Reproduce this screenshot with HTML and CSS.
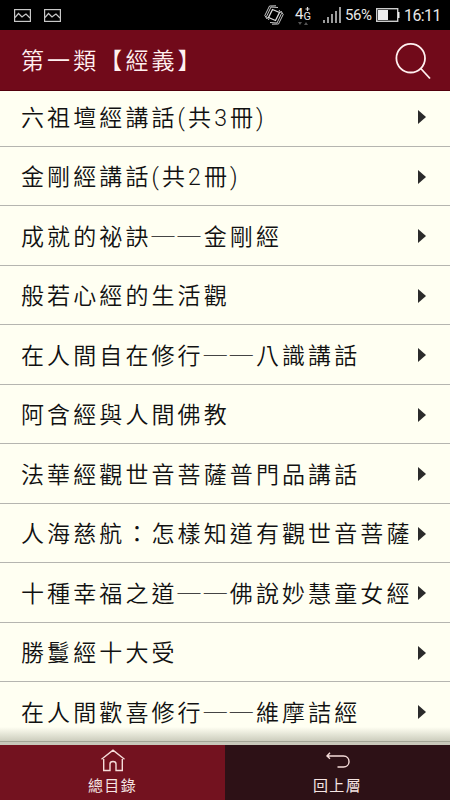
FILE: index.html
```html
<!DOCTYPE html>
<html lang="zh-Hant">
<head>
    <meta charset="UTF-8">
    <meta name="viewport" content="width=device-width, initial-scale=1.0">
    <title>第一類【經義】</title>
    <link rel="stylesheet" href="styles.css">
</head>
<body>
    <div class="status-bar">
        <div class="status-left">
            <svg class="photo" width="17" height="13" viewBox="0 0 17 13"><rect x="0.6" y="0.6" width="15.8" height="11.8"/><path d="M1 8.5L4.5 4.5L8 8L10.5 6L12 5L16 9"/></svg>
            <svg class="photo" width="17" height="13" viewBox="0 0 17 13"><rect x="0.6" y="0.6" width="15.8" height="11.8"/><path d="M1 8.5L4.5 4.5L8 8L10.5 6L12 5L16 9"/></svg>
        </div>
        <div class="status-right">
            <svg class="vibrate" width="20" height="20" viewBox="0 0 20 20"><path d="M8.500 4.500L15.500 7.500L11.500 15.500L4.500 12.500Z"/><path class="waves" d="M14 2.500L7 2L2.500 11.500L5 15M12 .8L5.500 1L.8 10.500L3 14M6 17.500L13 18L17.500 8.500L15 5M8 19.200L14.500 19L19.200 9.500L17 6"/></svg>
            <div class="network">
                <span class="four">4</span>
                <span class="gen">G</span>
                <svg class="network-marks" width="18" height="24" viewBox="0 0 18 24"><path class="plus" d="M12.500 2v4M10.500 4h4"/><path class="traffic" d="M3 17h4l-2 3zM9 20h4l-2 -3z"/></svg>
            </div>
            <svg class="signal" width="18" height="16" viewBox="0 0 18 16"><path d="M1 13v3M5 10v6M9 7v9M13 4v12M17 0v16"/></svg>
            <span class="percent">56%</span>
            <svg class="battery" width="24" height="14" viewBox="0 0 24 14"><rect class="case" x="0.7" y="0.7" width="21" height="12.600"/><path d="M2 2h10v10H2zM22 4h1.500v6h-1.500z"/></svg>
            <span class="clock">16:11</span>
        </div>
    </div>

    <header class="header">
        <h1>第一類【經義】</h1>
        <svg class="search" width="36" height="37" viewBox="0 0 36 37"><circle cx="15.700" cy="15.200" r="14.300"/><path d="M25.800 25.500L35 35.500"/></svg>
    </header>

    <ul class="list">
        <li>六祖壇經講話(共3冊)</li>
        <li>金剛經講話(共2冊)</li>
        <li>成就的祕訣<span class="dash">──</span>金剛經</li>
        <li>般若心經的生活觀</li>
        <li>在人間自在修行<span class="dash">──</span>八識講話</li>
        <li>阿含經與人間佛教</li>
        <li>法華經觀世音菩薩普門品講話</li>
        <li>人海慈航：怎樣知道有觀世音菩薩</li>
        <li>十種幸福之道<span class="dash">──</span>佛說妙慧童女經</li>
        <li>勝鬘經十大受</li>
        <li>在人間歡喜修行<span class="dash">──</span>維摩詰經</li>
    </ul>

    <nav class="tabs">
        <a class="tab tab-home">
            <svg width="26" height="24" viewBox="0 0 26 24"><path d="M1.500 10.300L13 1.200L24.500 10.300M3.700 10V21.500H10V15Q10 12.500 13 12.500T16 15V21.500H22.300V10"/></svg>
            <span>總目錄</span>
        </a>
        <a class="tab tab-back">
            <svg width="26" height="24" viewBox="0 0 26 24"><path d="M5 3.800L2 7L5 9.700M2 7H18.500C22 7 24 9.500 24 12.500C24 16 21.500 18 18.500 18H12.500"/></svg>
            <span>回上層</span>
        </a>
    </nav>
</body>
</html>
```
FILE: styles.css
```css
* {
    box-sizing: border-box;
}
body {
    display: flex;
    flex-direction: column;
    height: 800px;
    margin: 0;
    overflow: hidden;
    background-color: #fffff2;
    font-family: Roboto, "Noto Sans CJK TC", sans-serif;
    font-weight: 350;
}
svg {
    display: block;
    flex: none;
    fill: none;
}

/* status bar */
.status-bar {
    display: flex;
    justify-content: space-between;
    align-items: center;
    flex: none;
    height: 30px;
    padding: 0 10px 0 14px;
    background-color: #000;
    color: #e8e8e8;
    font-weight: 400;
    font-size: 16px;
}
.status-left, .status-right {
    display: flex;
    align-items: center;
}
.status-left {
    gap: 13px;
}
.photo {
    stroke: #c8c8c8;
    stroke-width: 1.2;
}
.vibrate {
    margin-right: 11px;
    stroke: #ddd;
    stroke-width: 1.3;
}
.vibrate .waves {
    stroke-width: 0.9;
}
.network {
    position: relative;
    display: flex;
    align-items: center;
    width: 18px;
    height: 20px;
    margin-right: 10px;
    line-height: 20px;
}
.four {
    padding-bottom: 2px;
    font-size: 15px;
}
.gen {
    padding-top: 3px;
    font-size: 11px;
}
.network-marks {
    position: absolute;
    left: 0;
    top: 0;
}
.plus {
    stroke: #ddd;
    stroke-width: 1.2;
}
.traffic {
    fill: #555;
}
.signal {
    margin-right: 4px;
    stroke: #ddd;
    stroke-width: 1.4;
}
.percent {
    width: 28px;
    margin-right: 3px;
    font-size: 15px;
    letter-spacing: -0.4px;
}
.battery {
    margin-right: 4px;
    fill: #eee;
}
.battery .case {
    fill: none;
    stroke: #ccc;
    stroke-width: 1.4;
}
.clock {
    width: 36px;
    letter-spacing: -0.6px;
    white-space: nowrap;
}

/* title */
.header {
    position: relative;
    z-index: 1;
    display: flex;
    justify-content: space-between;
    align-items: center;
    flex: none;
    height: 61px;
    padding: 0 19px 0 21px;
    background-color: #710a1a;
    border-bottom: 1px solid #52000c;
    color: #fff0f0;
}
h1 {
    margin: 0 0 3px;
    font-size: 23px;
    font-weight: 350;
    letter-spacing: 3.1px;
}
.search {
    margin-top: 2px;
    stroke: #fff0f0;
    stroke-width: 1.8;
}

/* book list */
.list {
    flex: 1;
    min-height: 0;
    margin: -4px 0 0;
    padding: 0;
    overflow: hidden;
    list-style: none;
}
.list li {
    display: flex;
    align-items: center;
    height: 59.5px;
    padding: 0 24px 1px 21px;
    border-bottom: 1px solid #b5b5b0;
    color: #111;
    font-size: 23px;
    letter-spacing: 3.1px;
    white-space: nowrap;
}
.list li::after {
    content: "";
    flex: none;
    margin-top: 3px;
    margin-left: auto;
    border: 7.5px solid transparent;
    border-left: 8.5px solid #2b2b2b;
    border-right: 0;
}
.dash {
    color: #444;
    font-weight: 300;
}

/* bottom tabs */
.tabs {
    position: relative;
    display: flex;
    flex: none;
    height: 59px;
    border-top: 4px solid #c8c8ba;
}
.tabs::before {
    content: "";
    position: absolute;
    left: 0;
    right: 0;
    top: -18px;
    height: 16px;
    background: linear-gradient(rgba(205, 206, 190, 0), #cdcebe 86%, #a3a596 88%, #a3a596 94%, #c8c8ba 95%);
}
.tab {
    display: flex;
    flex-direction: column;
    align-items: center;
    flex: 1;
    padding-top: 4px;
    color: #f5e5e3;
    font-size: 15px;
    font-weight: 400;
    line-height: 26px;
    letter-spacing: 1.3px;
}
.tab svg {
    stroke: #f5dcd9;
    stroke-width: 1.4;
}
.tab-home {
    background-color: #73121f;
}
.tab-back {
    background-color: #2d1116;
}
```
